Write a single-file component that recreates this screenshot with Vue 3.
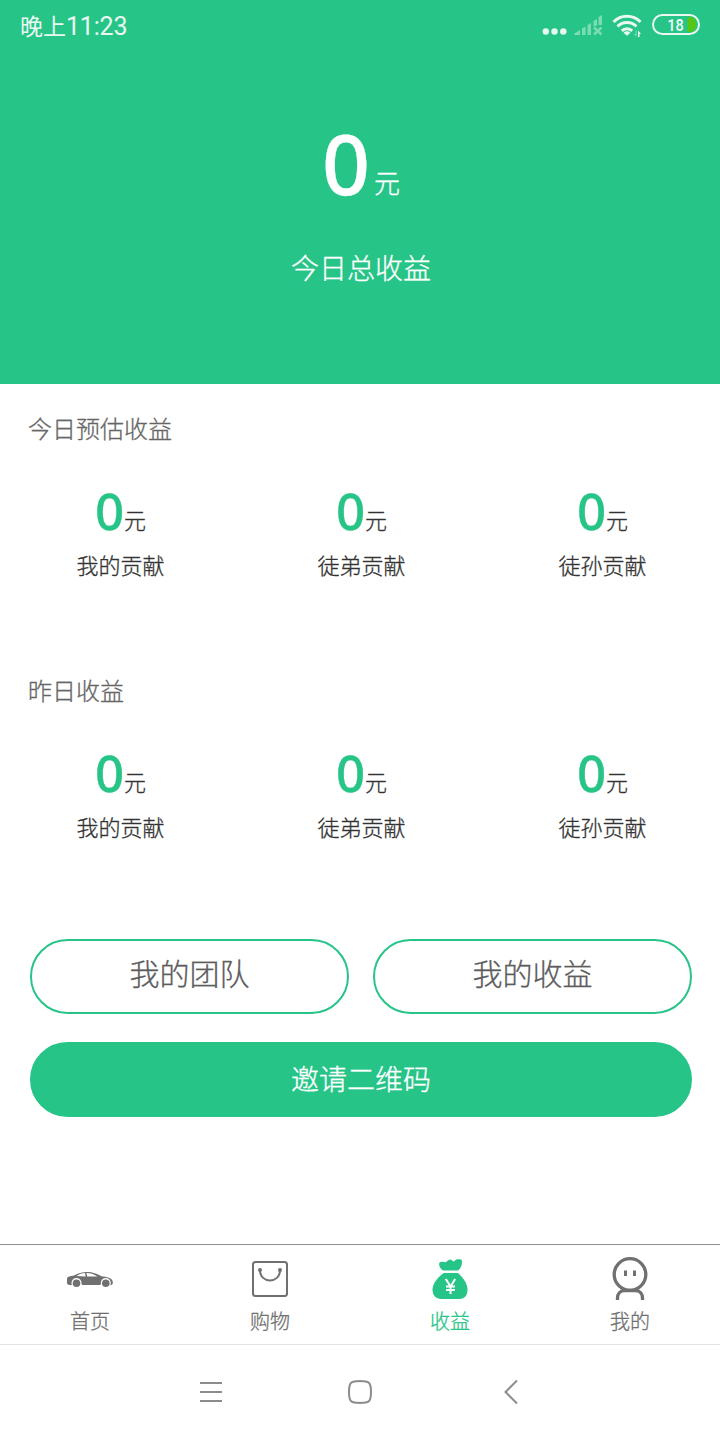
<script setup>
import { ref } from 'vue';

const total = ref(0);
const active = ref('income');

const sections = ref([
  {
    title: '今日预估收益',
    items: [
      { label: '我的贡献', value: 0 },
      { label: '徒弟贡献', value: 0 },
      { label: '徒孙贡献', value: 0 },
    ],
  },
  {
    title: '昨日收益',
    items: [
      { label: '我的贡献', value: 0 },
      { label: '徒弟贡献', value: 0 },
      { label: '徒孙贡献', value: 0 },
    ],
  },
]);

const tabs = [
  { key: 'home', name: '首页' },
  { key: 'shop', name: '购物' },
  { key: 'income', name: '收益' },
  { key: 'mine', name: '我的' },
];
</script>

<template>
  <div class="page">
    <header class="hero">
      <div class="status">
        <span class="time">晚上<span class="clock">11:23</span></span>
        <svg class="signals" width="160" height="30" viewBox="0 0 160 30">
          <g fill="#e9f9f2">
            <circle cx="5.8" cy="21.5" r="3.2" />
            <circle cx="14.5" cy="21.5" r="3.2" />
            <circle cx="23.3" cy="21.5" r="3.2" />
          </g>
          <g fill="#7bdcb3">
            <path d="M34.500 25v-1.500l5.500-3.500V25z" />
            <path d="M42 25v-6.500l3.500-2V25z" />
            <path d="M47.500 25V15l3.500-2v12z" />
            <path d="M53.500 16.500V11l3.500-2v6.500z" />
            <path d="M58.500 15V7l3.500-2v10z" />
          </g>
          <path d="M54 17.500l7.500 7M61.500 17.500l-7.500 7" stroke="#7bdcb3" stroke-width="2.400" />
          <g fill="none" stroke="#e9f9f2" stroke-width="3">
            <path d="M73.500 12a19 19 0 0 1 27 0" />
            <path d="M77.500 16.500a13.500 13.500 0 0 1 19 0" />
            <path d="M81.800 20.800a7.500 7.500 0 0 1 10.400 0" />
          </g>
          <path d="M83.500 22.700l3.500 3 3.500-3a5 5 0 0 0-7 0z" fill="#e9f9f2" />
          <path d="M98 20.500l3 3.500H99.500V27H98z" fill="#e9f9f2" />
          <path d="M96.500 27L94 24h1.500v-3.500h1z" fill="#7bdcb3" />
          <path d="M147.500 7h2.500a6 6 0 0 1 6 6v3a6 6 0 0 1-6 6h-2.500z" fill="#55c516" />
          <rect x="113" y="5" width="46" height="19" rx="9.500" fill="none" stroke="#e9f9f2" stroke-width="2" />
          <text x="135.500" y="20.500" text-anchor="middle" textLength="16.500" lengthAdjust="spacingAndGlyphs">18</text>
        </svg>
      </div>
      <div class="total">
        <span class="total-num">{{ total }}</span><span class="total-unit">元</span>
      </div>
      <div class="total-label">今日总收益</div>
    </header>

    <main>
      <section v-for="section in sections" :key="section.title" class="section">
        <h2>{{ section.title }}</h2>
        <div class="stats">
          <div v-for="item in section.items" :key="item.label" class="stat">
            <div class="value"><b>{{ item.value }}</b><span>元</span></div>
            <div class="label">{{ item.label }}</div>
          </div>
        </div>
      </section>

      <div class="buttons">
        <button class="btn">我的团队</button>
        <button class="btn">我的收益</button>
        <button class="btn primary">邀请二维码</button>
      </div>
    </main>

    <nav class="tabbar">
      <a v-for="tab in tabs" :key="tab.key" class="tab" :class="{ active: active === tab.key }" @click="active = tab.key">
        <svg v-if="tab.key === 'home'" width="48" height="44" viewBox="0 -0.7 48 44">
          <path d="M1 21.500c0-2 1-2.800 4-3.200l3-.5C12 15.500 16 14.300 21 14.300c6 0 9.500 1.700 14.500 4.200 5 .4 9 1.600 10.500 3.500l.9 2.500c0 2-1 2.900-3 3.200a5.500 5.500 0 0 0-9.800-.4H16a5.500 5.500 0 0 0-10.500.2C2 27.500 1 26.500 1 25z" fill="currentColor" />
          <path d="M10.500 18.400c3-2 5.500-2.800 8.500-3l.6 3.400zM20.400 15.200c4 0 7.500 1 11 3.600l-10.200.1z" fill="#fff" />
          <circle cx="10.500" cy="25.300" r="5" fill="#fff" />
          <circle cx="39.800" cy="25.300" r="5" fill="#fff" />
          <circle cx="10.500" cy="25.500" r="3.800" fill="currentColor" />
          <circle cx="39.800" cy="25.500" r="3.800" fill="currentColor" />
        </svg>
        <svg v-else-if="tab.key === 'shop'" width="48" height="44" viewBox="0 0 48 44">
          <rect x="7" y="5" width="34" height="34" rx="2.500" fill="none" stroke="currentColor" stroke-width="2" />
          <path d="M14 13c0 14 20 14 20 0" fill="none" stroke="currentColor" stroke-width="2" />
          <circle cx="14" cy="13" r="2" fill="currentColor" />
          <circle cx="34" cy="13" r="2" fill="currentColor" />
        </svg>
        <svg v-else-if="tab.key === 'income'" width="48" height="44" viewBox="0 0 48 44">
          <path d="M17 13.500c-3-2-4.500-5.500-3.500-8 2-1.500 4.500-.3 6-.2 1.500-.3 2.500-3 5-2.800 1.500.2 2 2 3 2 1.500-.2 2-2.300 4-2.300 2.500 0 4.500-.5 4.500 2.300 0 3-1 7-4 9z" fill="currentColor" />
          <path d="M18 16h14c4 3.500 9.500 10 9.500 16.500 0 6-3 9.500-8 9.500H15c-5 0-8.500-3.500-8.500-9.500C6.500 26 13 19 18 16z" fill="currentColor" />
          <path d="M19.800 22l4.700 7.500 4.700-7.500M24.500 29v8M20 29.500h9M20 33h9" fill="none" stroke="#fff" stroke-width="2" />
        </svg>
        <svg v-else width="48" height="44" viewBox="0 0 48 44">
          <g fill="none" stroke="currentColor" stroke-width="3.300">
            <circle cx="24" cy="17.500" r="15.800" />
            <path d="M11.500 43v-2c0-4 2.500-7.500 7-7.500h11c4.500 0 7 3.500 7 7.500v2" />
          </g>
          <path d="M19.500 13.500v5.500M28.500 13.500v5.500" stroke="currentColor" stroke-width="3" />
        </svg>
        <span>{{ tab.name }}</span>
      </a>
    </nav>

    <footer class="sysbar">
      <svg width="24" height="26" viewBox="0 0 24 26" fill="none" stroke="#8c8c8c" stroke-width="2">
        <path d="M1 4h22M1 13h22M1 22h22" />
      </svg>
      <svg width="26" height="26" viewBox="0 0 26 26" fill="none" stroke="#8c8c8c" stroke-width="2">
        <path d="M13 2c9.500 0 11 1.500 11 11s-1.500 11-11 11S2 22.500 2 13 3.500 2 13 2z" />
      </svg>
      <svg class="back" width="16" height="26" viewBox="0 0 16 26" fill="none" stroke="#8c8c8c" stroke-width="2">
        <path d="M14 1.500L2.500 13 14 24.500" />
      </svg>
    </footer>
  </div>
</template>

<style>
body {
  margin: 0;
  background: #fff;
}
</style>

<style scoped>
.page {
  display: flex;
  flex-direction: column;
  width: 720px;
  height: 1440px;
  overflow: hidden;
  font-family: "Noto Sans CJK SC", sans-serif;
  font-weight: 300;
  color: #333;
  background: #fff;
  -webkit-text-stroke: 0.3px;
}

.hero {
  height: 384px;
  color: #fff;
  background: #26c487;
}
.status {
  display: flex;
  justify-content: space-between;
  height: 50px;
  padding: 0 20px;
  box-sizing: border-box;
  -webkit-text-stroke: 0;
}
.time {
  font-size: 23px;
  font-weight: 400;
  line-height: 51px;
  color: #e9f9f2;
}
.clock {
  font-family: Roboto, sans-serif;
  font-size: 25px;
  letter-spacing: -0.2px;
}
.signals {
  margin: 10px 0 0;
}
.signals text {
  font-family: Roboto, sans-serif;
  font-size: 17px;
  font-weight: 600;
  fill: #e9f9f2;
}
.total {
  height: 122px;
  padding: 53px 0 0 2px;
  text-align: center;
  line-height: 120px;
}
.total-num {
  font-family: "Noto Sans", sans-serif;
  font-size: 84px;
  font-weight: 500;
}
.total-unit {
  margin-left: 4px;
  font-size: 26px;
  line-height: 1;
  vertical-align: 2px;
}
.total-label {
  margin-top: 21px;
  padding-left: 2px;
  text-align: center;
  font-size: 28px;
  line-height: 42px;
}

main {
  height: 860px;
}
.section {
  height: 262px;
}
h2 {
  margin: 0;
  padding: 24px 0 0 28px;
  font-size: 24px;
  font-weight: 300;
  line-height: 40px;
  color: #666;
}
.stats {
  display: grid;
  grid-template-columns: repeat(3, 241px);
  padding-top: 32px;
}
.stat {
  text-align: center;
}
.value {
  height: 60px;
  line-height: 60px;
}
.value b {
  font-family: "Noto Sans", sans-serif;
  font-size: 51px;
  font-weight: 500;
  color: #26c487;
}
.value span {
  font-size: 22px;
  line-height: 1;
  vertical-align: 1px;
}
.label {
  font-size: 22px;
  line-height: 48px;
}

.buttons {
  display: grid;
  grid-template-columns: 319px 319px;
  gap: 28px 24px;
  padding: 31px 0 0 30px;
}
.btn {
  height: 75px;
  padding: 0 0 9px;
  border: 2px solid #26c487;
  border-radius: 38px;
  background: #fff;
  font-family: inherit;
  font-size: 30px;
  font-weight: 300;
  color: #5c5c60;
  -webkit-text-stroke: 0.3px;
}
.btn.primary {
  grid-column: span 2;
  padding: 0 0 3px;
  font-size: 28px;
  color: #fff;
  background: #26c487;
}

.tabbar {
  display: grid;
  grid-template-columns: repeat(4, 1fr);
  height: 101px;
  box-sizing: border-box;
  border-top: 1px solid #8f8f8f;
  border-bottom: 1px solid #e3e3e3;
}
.tab {
  display: flex;
  flex-direction: column;
  align-items: center;
  padding-top: 12px;
  color: #707070;
}
.tab span {
  font-size: 20px;
  line-height: 39px;
}
.tab.active {
  color: #26c487;
}

.sysbar {
  display: flex;
  gap: 124px;
  padding: 34px 0 0 199px;
}
.back {
  margin-left: 6px;
}
</style>
